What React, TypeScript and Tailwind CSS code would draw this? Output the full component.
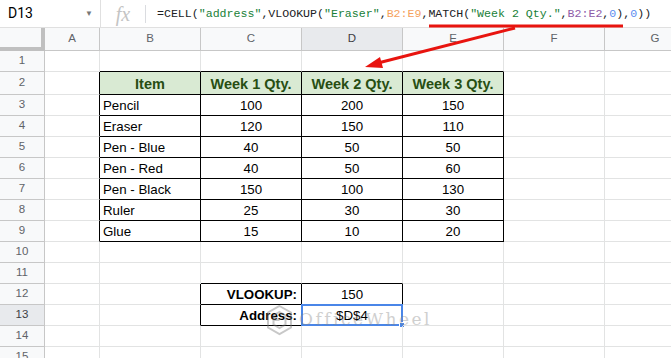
import React from 'react';

const COLS = ['A', 'B', 'C', 'D', 'E', 'F', 'G'];
const COL_W = [55, 101, 101, 101, 101, 101, 101];
const ROW_H = [21, 23, 21, 21, 21, 21, 21, 21, 21, 21, 21, 21, 21, 21, 21];

const data: Record<string, string> = {
  B2: 'Item', C2: 'Week 1 Qty.', D2: 'Week 2 Qty.', E2: 'Week 3 Qty.',
  B3: 'Pencil', C3: '100', D3: '200', E3: '150',
  B4: 'Eraser', C4: '120', D4: '150', E4: '110',
  B5: 'Pen - Blue', C5: '40', D5: '50', E5: '50',
  B6: 'Pen - Red', C6: '40', D6: '50', E6: '60',
  B7: 'Pen - Black', C7: '150', D7: '100', E7: '130',
  B8: 'Ruler', C8: '25', D8: '30', E8: '30',
  B9: 'Glue', C9: '15', D9: '10', E9: '20',
  C12: 'VLOOKUP:', D12: '150',
  C13: 'Address:', D13: '$D$4',
};

// which cells sit inside a black-bordered block
const inMain = (r: number, c: number) => r >= 2 && r <= 9 && c >= 1 && c <= 4;
const inSmall = (r: number, c: number) => r >= 12 && r <= 13 && c >= 2 && c <= 3;
const boxed = (r: number, c: number) => inMain(r, c) || inSmall(r, c);

function Cell({ r, c }: { r: number; c: number }) {
  const key = COLS[c] + r;
  const text = data[key];
  const rightBlack = boxed(r, c) || boxed(r, c + 1);
  const bottomBlack = boxed(r, c) || boxed(r + 1, c);
  const isHead = r === 2 && inMain(r, c);
  const isLabel = inSmall(r, c) && c === 2;
  const leftAlign = c === 1 && r >= 3 && r <= 9;

  return (
    <div
      className={`relative shrink-0 flex items-center border-r border-b ${
        rightBlack ? 'border-r-black' : 'border-r-[#e2e3e3]'
      } ${bottomBlack ? 'border-b-black' : 'border-b-[#e2e3e3]'} ${
        isHead ? 'bg-[#d9ead3] text-[#274e13] font-bold text-[14.5px] justify-center' : 'text-[13.3px] text-black'
      } ${isLabel ? 'font-bold justify-end pr-[4px]' : ''} ${
        leftAlign ? 'justify-start pl-[3px]' : !isHead && !isLabel ? 'justify-center' : ''
      } ${key === 'D13' ? 'text-[#333]' : ''}`}
      style={{ width: COL_W[c], height: ROW_H[r - 1] }}
    >
      {text && <span className="leading-none pt-[2px] whitespace-nowrap">{text}</span>}
      {key === 'D13' && (
        <>
          <div className="absolute -left-px -top-px w-[102px] h-[22px] border-2 border-[#4a86e8]" />
          <div className="absolute -right-[3px] -bottom-[3px] w-[6px] h-[6px] bg-[#4a86e8] border border-white" />
        </>
      )}
    </div>
  );
}

function FormulaBar() {
  const parts: [string, string][] = [
    ['=CELL(', 'text-[#202124]'],
    ['"address"', 'text-[#188038]'],
    [',VLOOKUP(', 'text-[#202124]'],
    ['"Eraser"', 'text-[#188038]'],
    [',', 'text-[#202124]'],
    ['B2:E9', 'text-[#f5a25d]'],
    [',MATCH(', 'text-[#202124]'],
    ['"Week 2 Qty."', 'text-[#188038]'],
    [',', 'text-[#202124]'],
    ['B2:E2', 'text-[#8e5ca8]'],
    [',', 'text-[#202124]'],
    ['0', 'text-[#5b8def]'],
    ['),', 'text-[#202124]'],
    ['0', 'text-[#5b8def]'],
    ['))', 'text-[#202124]'],
  ];
  return (
    <div className="flex h-[28px] border-b border-[#e0e0e0] bg-white">
      <div className="w-[101px] shrink-0 flex items-center justify-between pl-[8px] pr-[7px] border-r border-[#e0e0e0]">
        <span className="text-[14px] text-black font-['Roboto','Liberation_Sans',sans-serif]">D13</span>
        <span className="text-[8px] text-[#777]">▼</span>
      </div>
      <div className="w-[44px] shrink-0 flex items-center justify-center">
        <span className="italic text-[20px] text-[#c4c4c4] font-['Liberation_Serif',serif] leading-none">fx</span>
      </div>
      <div className="w-px h-[18px] self-center bg-[#dadce0]" />
      <div className="flex items-center pl-[11px] font-['Liberation_Mono',monospace] text-[11.6px] whitespace-nowrap">
        {parts.map(([t, cls], i) => (
          <span key={i} className={cls}>{t}</span>
        ))}
      </div>
    </div>
  );
}

export default function App() {
  const rows = Array.from({ length: 15 }, (_, i) => i + 1);
  return (
    <div className="relative w-[671px] h-[358px] overflow-hidden bg-white font-['Liberation_Sans',Arial,sans-serif]">
      <FormulaBar />

      {/* column headers */}
      <div className="flex h-[23px]">
        <div className="w-[45px] shrink-0 bg-[#f8f9fa] border-r-4 border-b-4 border-[#c0c0c0]" />
        {COLS.map((c, i) => (
          <div
            key={c}
            className={`shrink-0 flex items-center justify-center text-[11.5px] border-r border-b border-[#c7c7c7] ${
              c === 'D' ? 'bg-[#e8eaed] text-[#3c4043]' : 'bg-[#f8f9fa] text-[#5f6368]'
            }`}
            style={{ width: COL_W[i] }}
          >
            {c}
          </div>
        ))}
      </div>

      {rows.map((r) => (
        <div key={r} className="flex">
          <div
            className={`w-[45px] shrink-0 flex items-center justify-center text-[11.5px] border-r border-b border-[#c7c7c7] ${
              r === 13 ? 'bg-[#e8eaed] text-[#3c4043]' : 'bg-[#f8f9fa] text-[#5f6368]'
            }`}
            style={{ height: ROW_H[r - 1] }}
          >
            {r}
          </div>
          {COLS.map((_, c) => (
            <Cell key={c} r={r} c={c} />
          ))}
        </div>
      ))}

      {/* watermark */}
      <div className="absolute left-[266px] top-[304px] flex items-center gap-[6px] opacity-40 pointer-events-none">
        <svg width="27" height="32" viewBox="0 0 27 32" fill="none" stroke="#777" strokeWidth="2">
          <path d="M13.5 2 L25 8.5 V23.5 L13.5 30 L2 23.5 V8.5 Z" />
          <path d="M13.5 8 L19.5 11.5 V20.5 L13.5 24 L7.5 20.5 V11.5 Z" />
          <path d="M7.5 16 H13.5" />
        </svg>
        <span className="text-[17px] tracking-[2.5px] text-[#8a8a8a] font-['DejaVu_Serif',serif]">OfficeWheel</span>
      </div>

      {/* annotation: underline + arrow */}
      <svg className="absolute left-0 top-0 pointer-events-none" width="671" height="358">
        <line x1="429" y1="26" x2="623" y2="26" stroke="#e8140f" strokeWidth="3" />
        <line x1="515" y1="28" x2="378" y2="63" stroke="#e8140f" strokeWidth="3" />
        <polygon points="365,67 380,57 383,68" fill="#e8140f" />
      </svg>
    </div>
  );
}
